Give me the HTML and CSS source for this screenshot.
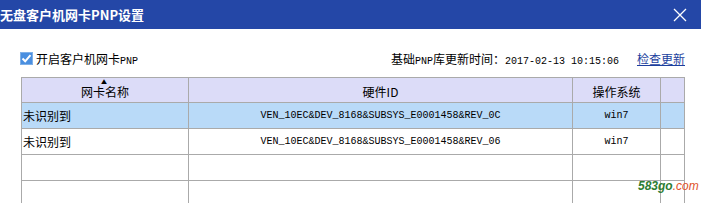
FILE: index.html
```html
<!DOCTYPE html>
<html>
<head>
<meta charset="utf-8">
<link rel="stylesheet" href="styles.css">
</head>
<body>
<div class="window">
  <div class="titlebar">
    <span class="title">无盘客户机网卡PNP设置</span>
    <svg class="close" width="14" height="14" viewBox="0 0 14 14"><path d="M1 1L13 13M13 1L1 13" stroke="#fff" stroke-width="1.3" fill="none"/></svg>
  </div>
  <div class="toolbar">
    <label class="check">
      <svg class="box" width="13" height="13" viewBox="0 0 13 13"><rect x="0.5" y="0.5" width="12" height="12" fill="#4a8fe0" stroke="#7fb0e8"/><path d="M2.5 6.5L5.2 9.3L10.5 3.2" stroke="#fff" stroke-width="2" fill="none"/></svg>
      <span>开启客户机网卡<span class="mono">PNP</span></span>
    </label>
    <div class="update">
      <span>基础<span class="mono">PNP</span>库更新时间：<span class="mono">2017-02-13 10:15:06</span></span>
      <a class="link" href="#">检查更新</a>
    </div>
  </div>
  <table class="grid">
    <thead>
      <tr>
        <th class="c1"><span class="sort">▲</span>网卡名称</th>
        <th class="c2">硬件ID</th>
        <th class="c3">操作系统</th>
        <th class="c4"></th>
      </tr>
    </thead>
    <tbody>
      <tr class="sel">
        <td class="name">未识别到</td>
        <td class="mono center">VEN_10EC&amp;DEV_8168&amp;SUBSYS_E0001458&amp;REV_0C</td>
        <td class="mono center">win7</td>
        <td></td>
      </tr>
      <tr>
        <td class="name">未识别到</td>
        <td class="mono center">VEN_10EC&amp;DEV_8168&amp;SUBSYS_E0001458&amp;REV_06</td>
        <td class="mono center">win7</td>
        <td></td>
      </tr>
      <tr><td></td><td></td><td></td><td></td></tr>
      <tr><td></td><td></td><td></td><td></td></tr>
    </tbody>
  </table>
  <div class="watermark"><span class="wm-g">583go</span><span class="wm-r">.com</span></div>
</div>
</body>
</html>
```
FILE: styles.css
```css
html, body {
  margin: 0;
  padding: 0;
  background: #fff;
  overflow: hidden;
}
body {
  font-family: "Noto Sans CJK SC", "Noto Sans", sans-serif;
  font-size: 12px;
  color: #000;
}
.window {
  position: relative;
  width: 701px;
  height: 203px;
  overflow: hidden;
}
.titlebar {
  height: 29px;
  background: #2447a7;
  display: flex;
  align-items: center;
  justify-content: space-between;
  padding: 0 14px 0 0;
}
.title {
  color: #fff;
  font-weight: bold;
  font-size: 13px;
  line-height: 29px;
}
.close {
  display: block;
}
.toolbar {
  display: flex;
  justify-content: space-between;
  align-items: center;
  height: 18px;
  padding: 20px 16px 0 20px;
  margin-bottom: 10px;
}
.check {
  display: flex;
  align-items: center;
  gap: 3px;
}
.box {
  display: block;
}
.update {
  display: flex;
  align-items: center;
  gap: 18px;
}
.mono {
  font-family: "Liberation Mono", "DejaVu Sans Mono", monospace;
  font-size: 10px;
}
.link {
  color: #1c3f9e;
  text-decoration: underline;
}
.grid {
  border-collapse: collapse;
  margin-left: 21px;
  table-layout: fixed;
  width: 664px;
}
.grid th, .grid td {
  border: 1px solid #aaaaaa;
  padding: 0;
  white-space: nowrap;
}
.grid th {
  background: #dcdcf8;
  height: 20px;
  font-weight: normal;
  font-size: 12px;
  line-height: 14px;
  padding-top: 4px;
  vertical-align: middle;
  position: relative;
}
.grid td {
  height: 25px;
}
.c1 { width: 166px; }
.c2 { width: 383px; }
.c3 { width: 87px; }
.c4 { width: 23px; }
.sort {
  position: absolute;
  top: 1px;
  left: 79px;
  font-size: 6px;
  line-height: 6px;
}
.sel td {
  background: #b9daf8;
}
.name {
  font-size: 12px;
  padding-left: 1px !important;
}
.center {
  text-align: center;
}
.watermark {
  position: absolute;
  left: 638px;
  top: 179px;
  font-family: "Liberation Sans", sans-serif;
  font-weight: bold;
  font-style: italic;
  font-size: 12px;
}
.wm-g { color: #2e7d32; }
.wm-r { color: #e0522a; font-weight: normal; }
```
